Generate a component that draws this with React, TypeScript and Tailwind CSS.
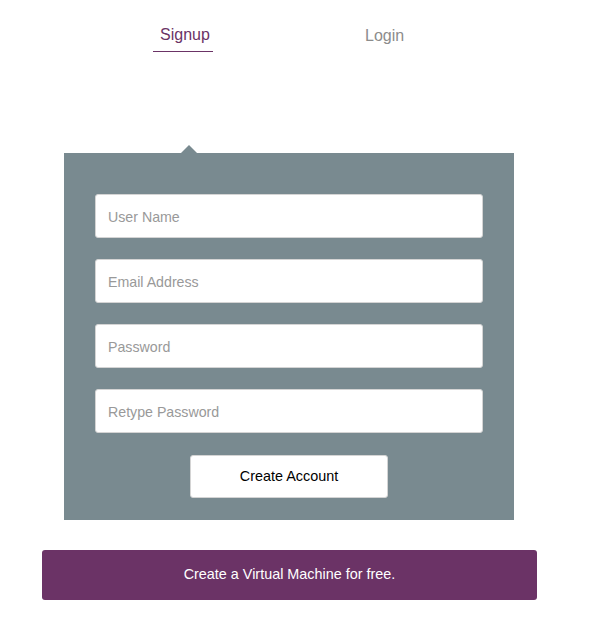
import React from 'react';

const fields = ['User Name', 'Email Address', 'Password', 'Retype Password'];

const Tabs = () => {
  return (
    <div className="flex h-[52px] items-end pl-[153px] text-[16px] leading-[24px]">
      <div className="w-[60px] border-b border-b-[#6b3366] pb-[4px] pl-[7px] text-[#6b3366]">Signup</div>
      <div className="ml-[152px] pb-[4px] text-[#8c8c8c]">Login</div>
    </div>
  );
};

const SignupForm = () => {
  return (
    <div className="relative ml-[22px] w-[450px] bg-[#798a90] px-[31px] pt-[41px] pb-[22px]">
      <div className="absolute -top-[8px] left-[117px] h-0 w-0 border-x-[8px] border-b-[8px] border-x-transparent border-b-[#798a90]" />
      <div className="flex flex-col gap-[21px]">
        {fields.map((f) => (
          <input
            key={f}
            type={f.includes('Password') ? 'password' : 'text'}
            placeholder={f}
            className="h-[44px] w-full rounded-[3px] border border-[#d4d4d4] bg-white px-[12px] pt-[2px] text-[14.2px] text-[#333] outline-none placeholder:text-[#999]"
          />
        ))}
      </div>
      <div className="mt-[22px] flex justify-center">
        <button className="h-[43px] w-[198px] rounded-[3px] border border-[#d4d4d4] bg-white pt-[1px] text-[14.4px] text-black">
          Create Account
        </button>
      </div>
    </div>
  );
};

export default function App() {
  return (
    <div className="min-h-[642px] bg-white font-['Liberation_Sans',Arial,sans-serif]">
      <Tabs />
      <div className="pl-[42px] pt-[101px]">
        <SignupForm />
        <button className="mt-[30px] h-[50px] w-[495px] rounded-[3px] bg-[#6b3366] text-[14.4px] text-white">
          Create a Virtual Machine for free.
        </button>
      </div>
    </div>
  );
}
